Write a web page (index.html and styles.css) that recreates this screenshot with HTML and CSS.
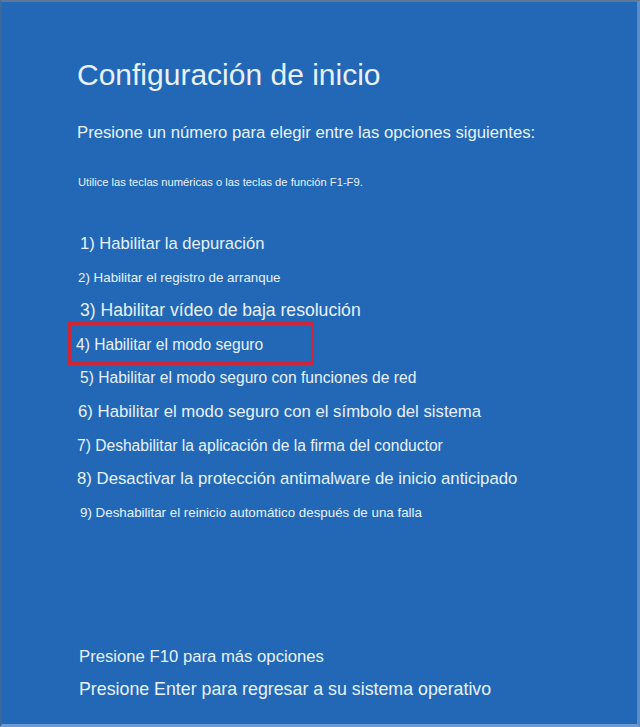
FILE: index.html
```html
<!DOCTYPE html>
<html lang="es">
<head>
<meta charset="utf-8">
<title>Configuración de inicio</title>
<link rel="stylesheet" href="styles.css">
</head>
<body>
<div class="screen">
  <h1 class="title">Configuración de inicio</h1>
  <p class="prompt">Presione un número para elegir entre las opciones siguientes:</p>
  <p class="hint">Utilice las teclas numéricas o las teclas de función F1-F9.</p>
  <ul class="options">
    <li class="opt s16 i80">1) Habilitar la depuración</li>
    <li class="opt s13 i78">2) Habilitar el registro de arranque</li>
    <li class="opt s17 i80">3) Habilitar vídeo de baja resolución</li>
    <li class="opt s15 i76 selected">4) Habilitar el modo seguro</li>
    <li class="opt s15 i80">5) Habilitar el modo seguro con funciones de red</li>
    <li class="opt s16b i78">6) Habilitar el modo seguro con el símbolo del sistema</li>
    <li class="opt s15 i77">7) Deshabilitar la aplicación de la firma del conductor</li>
    <li class="opt s16b i77">8) Desactivar la protección antimalware de inicio anticipado</li>
    <li class="opt s13 i80">9) Deshabilitar el reinicio automático después de una falla</li>
  </ul>
  <div class="footer">
    <p class="foot f1">Presione F10 para más opciones</p>
    <p class="foot f2">Presione Enter para regresar a su sistema operativo</p>
  </div>
</div>
</body>
</html>
```
FILE: styles.css
```css
html, body {
  margin: 0;
  padding: 0;
  background: #2267b5;
}
.screen {
  box-sizing: border-box;
  width: 640px;
  height: 727px;
  background: #2268b6;
  border-top: 2px solid #5d7898;
  border-left: 2px solid #3f6797;
  border-right: 3px solid #5b8ccc;
  border-bottom: 3px solid #6b9ad4;
  color: #e8f1fb;
  font-family: "Liberation Sans", Arial, sans-serif;
  display: flex;
  flex-direction: column;
}
.title {
  margin: 53px 0 0 75px;
  font-size: 30px;
  font-weight: normal;
  line-height: 40px;
}
.prompt {
  margin: 28px 0 0 75px;
  font-size: 16.7px;
  line-height: 20px;
}
.hint {
  margin: 32px 0 0 76px;
  font-size: 11.2px;
  line-height: 14px;
}
.options {
  list-style: none;
  margin: 38px 0 0 0;
  padding: 0;
}
.opt {
  height: 33.6px;
  line-height: 33.6px;
  white-space: nowrap;
}
.s13 { font-size: 13.35px; }
.s15 { font-size: 15.6px; }
.s16 { font-size: 16.6px; }
.s16b { font-size: 16.75px; }
.s17 { font-size: 17.6px; }
.i76 { padding-left: 74px; }
.i77 { padding-left: 75px; }
.i78 { padding-left: 76px; }
.i80 { padding-left: 78px; }
.selected {
  position: relative;
}
.selected::before {
  content: "";
  position: absolute;
  left: 66px;
  top: -6px;
  width: 240px;
  height: 37px;
  border: 3px solid #cf2637;
}
.footer {
  margin-top: auto;
  margin-bottom: 18px;
}
.foot {
  margin: 0 0 0 77px;
  height: 33px;
  line-height: 33px;
}
.f1 { font-size: 16.7px; }
.f2 { font-size: 17.8px; }
```
